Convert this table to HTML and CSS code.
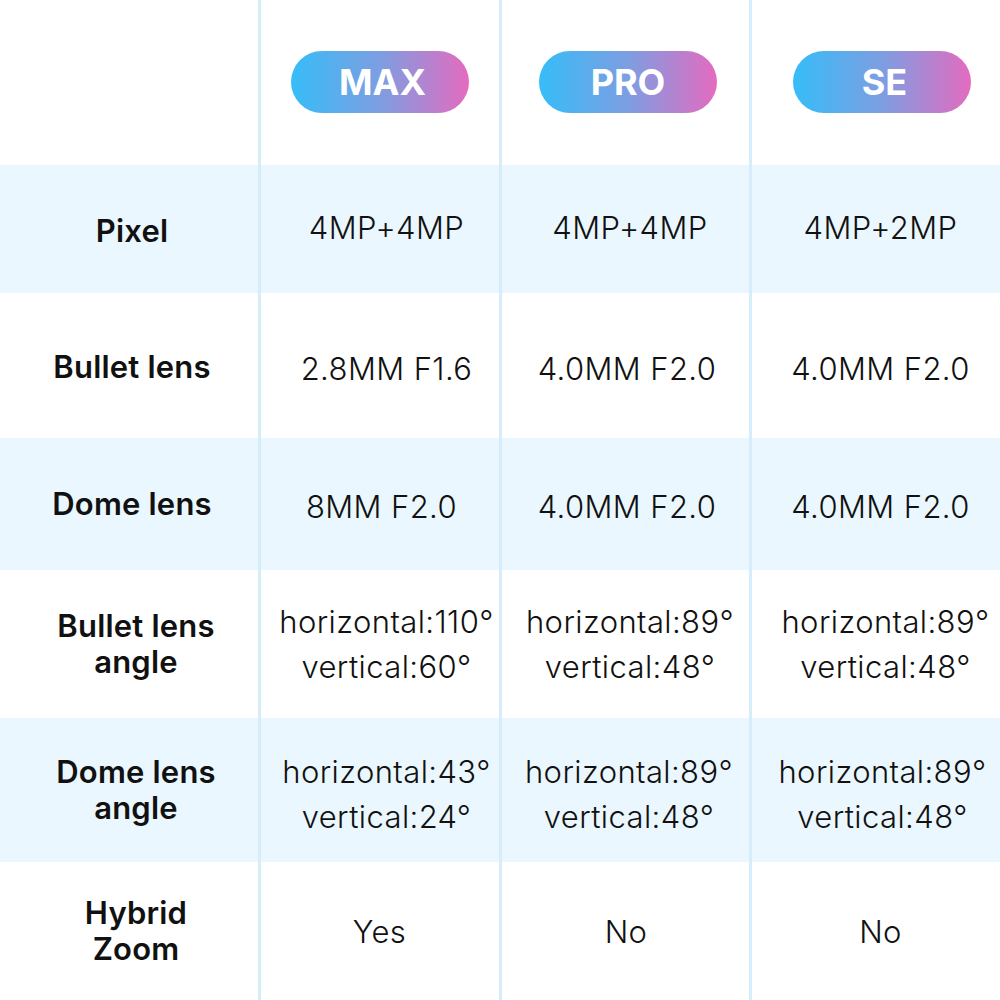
FILE: index.html
```html
<!DOCTYPE html>
<html lang="en">
<head>
<meta charset="utf-8">
<title>Comparison</title>
<link rel="stylesheet" href="styles.css">
</head>
<body>
<div class="table">
  <div class="row head">
    <div class="cell label"></div>
    <div class="cell"><span class="pill">MAX</span></div>
    <div class="cell"><span class="pill">PRO</span></div>
    <div class="cell"><span class="pill">SE</span></div>
  </div>
  <div class="row band r-pixel">
    <div class="cell label">Pixel</div>
    <div class="cell val">4MP+4MP</div>
    <div class="cell val">4MP+4MP</div>
    <div class="cell val">4MP+2MP</div>
  </div>
  <div class="row r-bullet">
    <div class="cell label">Bullet lens</div>
    <div class="cell val">2.8MM F1.6</div>
    <div class="cell val">4.0MM F2.0</div>
    <div class="cell val">4.0MM F2.0</div>
  </div>
  <div class="row band r-dome">
    <div class="cell label">Dome lens</div>
    <div class="cell val">8MM F2.0</div>
    <div class="cell val">4.0MM F2.0</div>
    <div class="cell val">4.0MM F2.0</div>
  </div>
  <div class="row r-bangle">
    <div class="cell label">Bullet lens<br>angle</div>
    <div class="cell val">horizontal:110°<br>vertical:60°</div>
    <div class="cell val">horizontal:89°<br>vertical:48°</div>
    <div class="cell val">horizontal:89°<br>vertical:48°</div>
  </div>
  <div class="row band r-dangle">
    <div class="cell label">Dome lens<br>angle</div>
    <div class="cell val">horizontal:43°<br>vertical:24°</div>
    <div class="cell val">horizontal:89°<br>vertical:48°</div>
    <div class="cell val">horizontal:89°<br>vertical:48°</div>
  </div>
  <div class="row r-hybrid">
    <div class="cell label">Hybrid<br>Zoom</div>
    <div class="cell val">Yes</div>
    <div class="cell val">No</div>
    <div class="cell val">No</div>
  </div>
  <div class="vline l1"></div>
  <div class="vline l2"></div>
  <div class="vline l3"></div>
</div>
</body>
</html>
```
FILE: styles.css
```css
html, body {
  margin: 0;
  padding: 0;
  background: #ffffff;
}
body {
  font-family: Inter, "Liberation Sans", sans-serif;
  color: #111111;
}
.table {
  position: relative;
  width: 1000px;
  height: 1000px;
  overflow: hidden;
}
.row {
  display: grid;
  grid-template-columns: 258px 243px 250px 249px;
}
.band {
  background: #eaf7fe;
}
.head { height: 165px; }
.r-pixel { height: 128px; }
.r-bullet { height: 145px; }
.r-dome { height: 132px; }
.r-bangle { height: 148px; }
.r-dangle { height: 144px; }
.r-hybrid { height: 138px; }
.cell {
  display: flex;
  align-items: center;
  justify-content: center;
  text-align: center;
  box-sizing: border-box;
}
.cell:nth-child(1) { padding-left: 6px; }
.cell:nth-child(2) { padding-left: 14px; }
.cell:nth-child(3) { padding-left: 8px; }
.cell:nth-child(4) { padding-left: 12px; }
.r-bangle .cell:nth-child(1),
.r-dangle .cell:nth-child(1),
.r-hybrid .cell:nth-child(1) { padding-left: 14px; }
.r-dome .cell:nth-child(2) { padding-left: 4px; }
.r-dome .cell:nth-child(3) { padding-left: 2px; }
.r-bullet .cell:nth-child(3) { padding-left: 2px; }
.r-bullet .cell:nth-child(4) { padding-left: 10px; }
.r-dome .cell:nth-child(4) { padding-left: 10px; }
.r-pixel .cell:nth-child(4) { padding-left: 10px; }
.r-bangle .cell:nth-child(4) { padding-left: 20px; }
.r-dangle .cell:nth-child(3) { padding-left: 6px; }
.r-dangle .cell:nth-child(4) { padding-left: 14px; }
.r-hybrid .cell:nth-child(2) { padding-left: 0; }
.r-hybrid .cell:nth-child(3) { padding-left: 0; }
.r-hybrid .cell:nth-child(4) { padding-left: 10px; }
.head .cell {
  align-items: flex-start;
  padding-top: 51px;
}
.head .cell:nth-child(2) { padding-left: 0; }
.head .cell:nth-child(3) { padding-left: 4px; }
.head .cell:nth-child(4) { padding-left: 12px; }
.label {
  font-weight: 600;
  font-size: 31px;
  line-height: 36px;
  letter-spacing: 0.2px;
}
.val {
  font-weight: 300;
  font-size: 31px;
  line-height: 45px;
  letter-spacing: 0.4px;
}
.r-pixel .label { padding-top: 4px; }
.r-pixel .val { padding-bottom: 4px; }
.r-bullet .label { padding-top: 2px; }
.r-bullet .val { padding-top: 6px; }
.r-dome .val { padding-top: 4px; }
.r-dome .label { padding-top: 0; }
.r-dangle .val { padding-top: 8px; }
.pill {
  display: inline-flex;
  align-items: center;
  justify-content: center;
  width: 178px;
  height: 62px;
  border-radius: 31px;
  background: linear-gradient(90deg, #36bdf8 0%, #7d9ee2 50%, #e46bbf 100%);
  color: #ffffff;
  font-weight: 700;
  font-size: 36px;
  padding-left: 6px;
  box-sizing: border-box;
}
.head .cell:nth-child(3) .pill { padding-left: 0; }
.vline {
  position: absolute;
  top: 0;
  bottom: 0;
  width: 3px;
  background: #d6eefc;
}
.l1 { left: 258px; }
.l2 { left: 499px; }
.l3 { left: 749px; }
```
